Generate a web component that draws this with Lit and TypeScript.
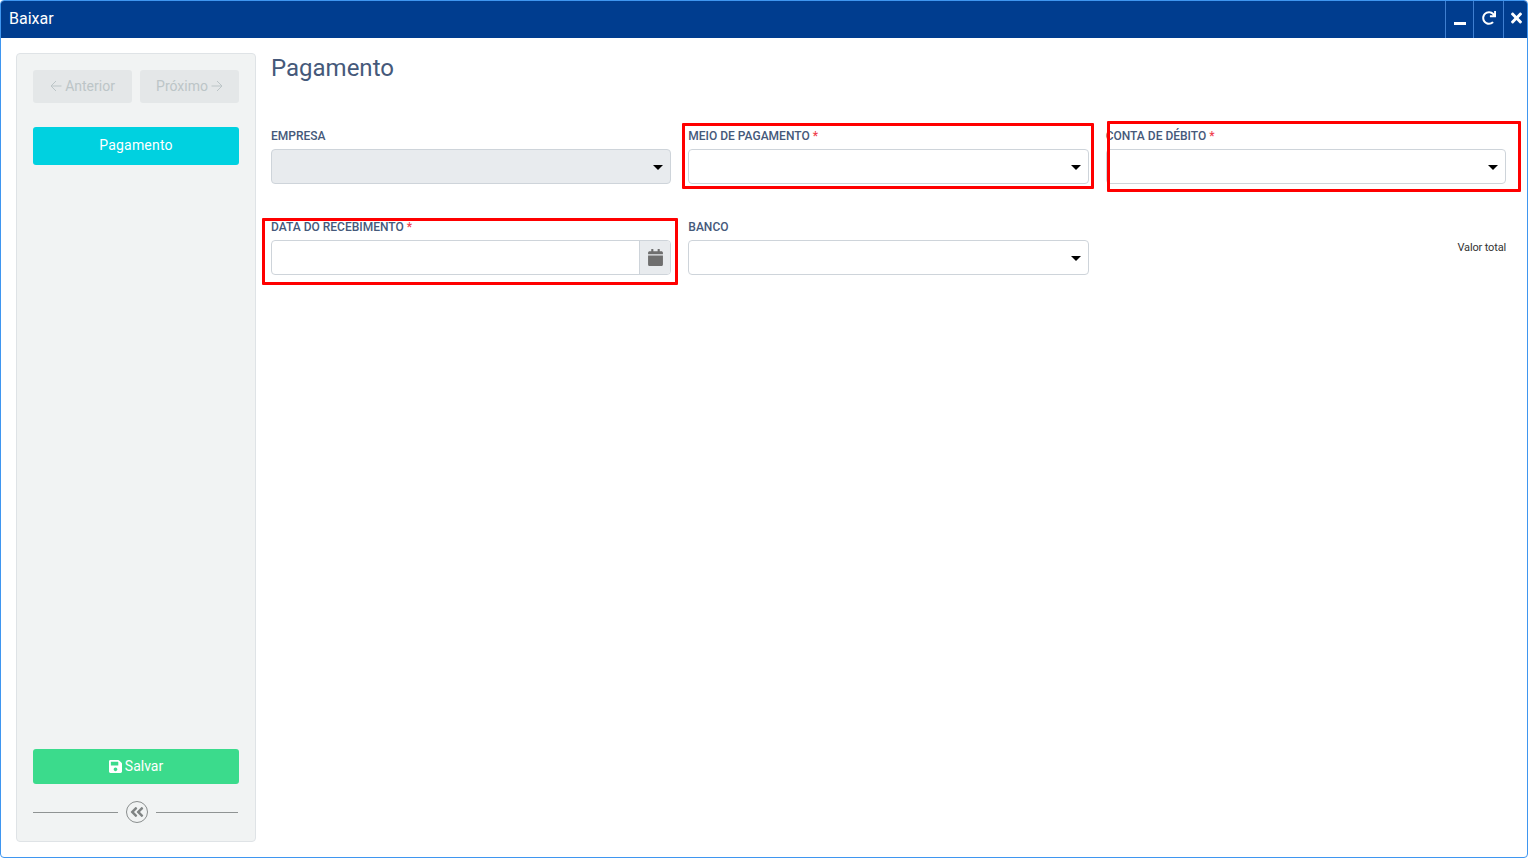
import { LitElement, html, css, svg } from "lit";
import { customElement } from "lit/decorators.js";

const ICONS = {
  save: ["0 0 448 512", "M433.941 129.941l-83.882-83.882A48 48 0 0 0 316.118 32H48C21.49 32 0 53.49 0 80v352c0 26.51 21.49 48 48 48h352c26.51 0 48-21.49 48-48V163.882a48 48 0 0 0-14.059-33.941zM224 416c-35.346 0-64-28.654-64-64 0-35.346 28.654-64 64-64s64 28.654 64 64c0 35.346-28.654 64-64 64zm96-304.520V212c0 6.627-5.373 12-12 12H76c-6.627 0-12-5.373-12-12V108c0-6.627 5.373-12 12-12h228.520c3.183 0 6.235 1.264 8.485 3.515l3.48 3.48A11.996 11.996 0 0 1 320 111.480z"],
  calendar: ["0 0 448 512", "M12 192h424c6.6 0 12 5.4 12 12v260c0 26.5-21.5 48-48 48H48c-26.5 0-48-21.5-48-48V204c0-6.6 5.4-12 12-12zm436-44v-36c0-26.5-21.5-48-48-48h-48V12c0-6.6-5.4-12-12-12h-40c-6.6 0-12 5.4-12 12v52H160V12c0-6.6-5.4-12-12-12h-40c-6.6 0-12 5.4-12 12v52H48C21.5 64 0 85.5 0 112v36c0 6.6 5.4 12 12 12h424c6.6 0 12-5.4 12-12z"],
  redo: ["0 0 512 512", "M500.33 0h-47.41a12 12 0 0 0-12 12.57l4 82.76A247.42 247.42 0 0 0 256 8C119.34 8 7.9 119.53 8 256.19 8.1 393.07 119.1 504 256 504a247.1 247.1 0 0 0 166.18-63.91 12 12 0 0 0 .48-17.43l-34-34a12 12 0 0 0-16.38-.55A176 176 0 1 1 402.1 157.8l-101.53-4.87a12 12 0 0 0-12.57 12v47.41a12 12 0 0 0 12 12h200.33a12 12 0 0 0 12-12V12a12 12 0 0 0-12-12z"],
  times: ["0 0 352 512", "M242.72 256l100.07-100.07c12.28-12.28 12.28-32.19 0-44.48l-22.24-22.24c-12.28-12.28-32.19-12.28-44.48 0L176 189.28 75.93 89.21c-12.28-12.28-32.19-12.28-44.48 0L9.21 111.45c-12.28 12.28-12.28 32.19 0 44.48L109.28 256 9.21 356.07c-12.28 12.28-12.28 32.19 0 44.48l22.24 22.24c12.28 12.28 32.2 12.28 44.48 0L176 322.72l100.07 100.07c12.28 12.28 32.2 12.28 44.48 0l22.24-22.24c12.28-12.28 12.28-32.19 0-44.48L242.72 256z"],
  dbl: ["0 0 448 512", "M223.7 239l136-136c9.4-9.4 24.6-9.4 33.9 0l22.6 22.6c9.4 9.4 9.4 24.6 0 33.9L319.9 256l96.4 96.4c9.4 9.4 9.4 24.6 0 33.9L393.7 409c-9.4 9.4-24.6 9.4-33.9 0l-136-136c-9.5-9.4-9.5-24.6-.1-34zm-192 34l136 136c9.4 9.4 24.6 9.4 33.9 0l22.6-22.6c9.4-9.4 9.4-24.6 0-33.9L127.9 256l96.4-96.4c9.4-9.4 9.4-24.6 0-33.9L201.7 103c-9.4-9.4-24.6-9.4-33.9 0l-136 136c-9.5 9.4-9.5 24.6-.1 34z"],
} as const;

const icon = (name: keyof typeof ICONS, cls: string) => {
  const [vb, d] = ICONS[name];
  return html`<svg class=${cls} viewBox=${vb} aria-hidden="true">${svg`<path fill="currentColor" d=${d}></path>`}</svg>`;
};

const arrow = (dir: "l" | "r") => html`<svg class="arrow" viewBox="0 0 12 12" aria-hidden="true">${
  dir === "l"
    ? svg`<path d="M11.5 6H1M6 1 1 6l5 5" fill="none" stroke="currentColor" stroke-width="1"></path>`
    : svg`<path d="M.5 6H11M6 1l5 5-5 5" fill="none" stroke="currentColor" stroke-width="1"></path>`
}</svg>`;

@customElement("app-root")
export class AppRoot extends LitElement {
  static styles = css`
    :host { display: block; width: 1528px; height: 858px; font-family: Roboto, "Liberation Sans", sans-serif; }
    * { box-sizing: border-box; }
    .window { position: relative; width: 1528px; height: 858px; border: 1px solid #3f96f0; border-radius: 4px; background: #fff; display: flex; flex-direction: column; overflow: hidden; }
    .titlebar { height: 37px; flex: none; background: #003d8f; color: #fff; display: flex; align-items: center; }
    .title { flex: 1; padding-left: 8px; font-size: 16px; line-height: 35px; height: 37px; }
    .ctl { height: 37px; border-left: 1px solid #3f7fd0; display: flex; align-items: center; justify-content: center; color: #fff; }
    .ctl.min { width: 28px; }
    .ctl.redo { width: 30px; }
    .ctl.close { width: 24px; }
    .bar { display: block; width: 12px; height: 3px; background: #fff; margin-top: 8px; }
    .i-redo { width: 14px; height: 14px; margin-top: -3px; }
    .i-times { width: 11px; height: 16px; margin-top: -3px; margin-left: 2px; }
    .body { flex: 1; display: flex; min-height: 0; padding: 15px 21px 15px 15px; gap: 15px; }
    .side { width: 240px; flex: none; background: #f1f3f3; border: 1px solid #dfe3e6; border-radius: 4px; padding: 16px; display: flex; flex-direction: column; }
    .nav { display: flex; gap: 8px; }
    .navbtn { flex: 1; height: 33px; padding-bottom: 2px; background: #e4e7e8; color: #bcc5c7; border-radius: 3px; font-size: 14px; display: flex; align-items: center; justify-content: center; gap: 3px; }
    .arrow { width: 12px; height: 12px; margin-top: 1px; }
    .step { margin-top: 24px; height: 38px; padding-bottom: 2px; border-radius: 3px; background: #00d1e0; color: #fff; font-size: 14px; letter-spacing: .2px; display: flex; align-items: center; justify-content: center; }
    .spacer { flex: 1; }
    .save { height: 35px; padding-bottom: 1px; border-radius: 3px; background: #3bdb8c; color: #fff; font-size: 14px; display: flex; align-items: center; justify-content: center; gap: 3px; }
    .i-save { width: 13px; height: 15px; }
    .collapse { display: flex; align-items: center; margin-top: 16px; height: 24px; margin-bottom: 1px; padding-right: 1px; }
    .line { flex: 1; height: 1px; background: #8f9393; }
    .line.first { flex: none; width: 85px; }
    .circle { width: 22px; height: 22px; margin: 0 8px; border: 1px solid #8a8e8e; border-radius: 50%; display: flex; align-items: center; justify-content: center; color: #808484; }
    .i-dbl { width: 14px; height: 16px; }
    .main { flex: 1; min-width: 0; }
    h1 { margin: 1px 0 0; font-size: 24px; font-weight: 400; line-height: 29px; color: #45597a; }
    .grid { display: grid; grid-template-columns: repeat(3, 1fr); column-gap: 17px; row-gap: 21px; margin-top: 40px; }
    .field { height: 70px; display: flex; flex-direction: column; }
    label { display: block; height: 26px; padding-top: 6px; font-size: 12px; line-height: 14px; font-weight: 500; color: #45597a; }
    .req { color: #f0414e; }
    .select { height: 35px; border: 1px solid #ced4da; border-radius: 4px; background: #fff; display: flex; align-items: center; justify-content: flex-end; padding-right: 7px; }
    .select.off { background: #e8ebee; }
    .caret { width: 0; height: 0; border-left: 5px solid transparent; border-right: 5px solid transparent; border-top: 5px solid #000; margin-top: 1px; }
    .date { height: 35px; border: 1px solid #ced4da; border-radius: 4px; background: #fff; display: flex; overflow: hidden; justify-content: flex-end; }
    .addon { width: 31px; background: #e8ebee; border-left: 1px solid #ced4da; display: flex; align-items: center; justify-content: center; color: #6f6f6f; }
    .i-cal { width: 15px; height: 17px; }
    .total { text-align: right; font-size: 11px; letter-spacing: -.15px; color: #333; padding-top: 27px; line-height: 14px; }
    .mark { position: absolute; border: 3px solid #f00; border-radius: 1px; pointer-events: none; }
    .m1 { left: 681px; top: 122px; width: 412px; height: 66px; }
    .m2 { left: 1106px; top: 120px; width: 414px; height: 71px; }
    .m3 { left: 261px; top: 217px; width: 416px; height: 67px; }
  `;

  private select(off = false) {
    return html`<div class="select ${off ? "off" : ""}"><span class="caret"></span></div>`;
  }

  render() {
    return html`
      <div class="window">
        <header class="titlebar">
          <div class="title">Baixar</div>
          <div class="ctl min"><span class="bar"></span></div>
          <div class="ctl redo">${icon("redo", "i-redo")}</div>
          <div class="ctl close">${icon("times", "i-times")}</div>
        </header>
        <div class="body">
          <aside class="side">
            <div class="nav">
              <div class="navbtn">${arrow("l")}<span>Anterior</span></div>
              <div class="navbtn"><span>Próximo</span>${arrow("r")}</div>
            </div>
            <div class="step">Pagamento</div>
            <div class="spacer"></div>
            <div class="save">${icon("save", "i-save")}<span>Salvar</span></div>
            <div class="collapse">
              <span class="line first"></span>
              <span class="circle">${icon("dbl", "i-dbl")}</span>
              <span class="line"></span>
            </div>
          </aside>
          <main class="main">
            <h1>Pagamento</h1>
            <div class="grid">
              <div class="field"><label>EMPRESA</label>${this.select(true)}</div>
              <div class="field"><label>MEIO DE PAGAMENTO <span class="req">*</span></label>${this.select()}</div>
              <div class="field"><label>CONTA DE DÉBITO <span class="req">*</span></label>${this.select()}</div>
              <div class="field">
                <label>DATA DO RECEBIMENTO <span class="req">*</span></label>
                <div class="date"><div class="addon">${icon("calendar", "i-cal")}</div></div>
              </div>
              <div class="field"><label>BANCO</label>${this.select()}</div>
              <div class="field"><div class="total">Valor total</div></div>
            </div>
          </main>
        </div>
        <div class="mark m1"></div>
        <div class="mark m2"></div>
        <div class="mark m3"></div>
      </div>
    `;
  }
}
